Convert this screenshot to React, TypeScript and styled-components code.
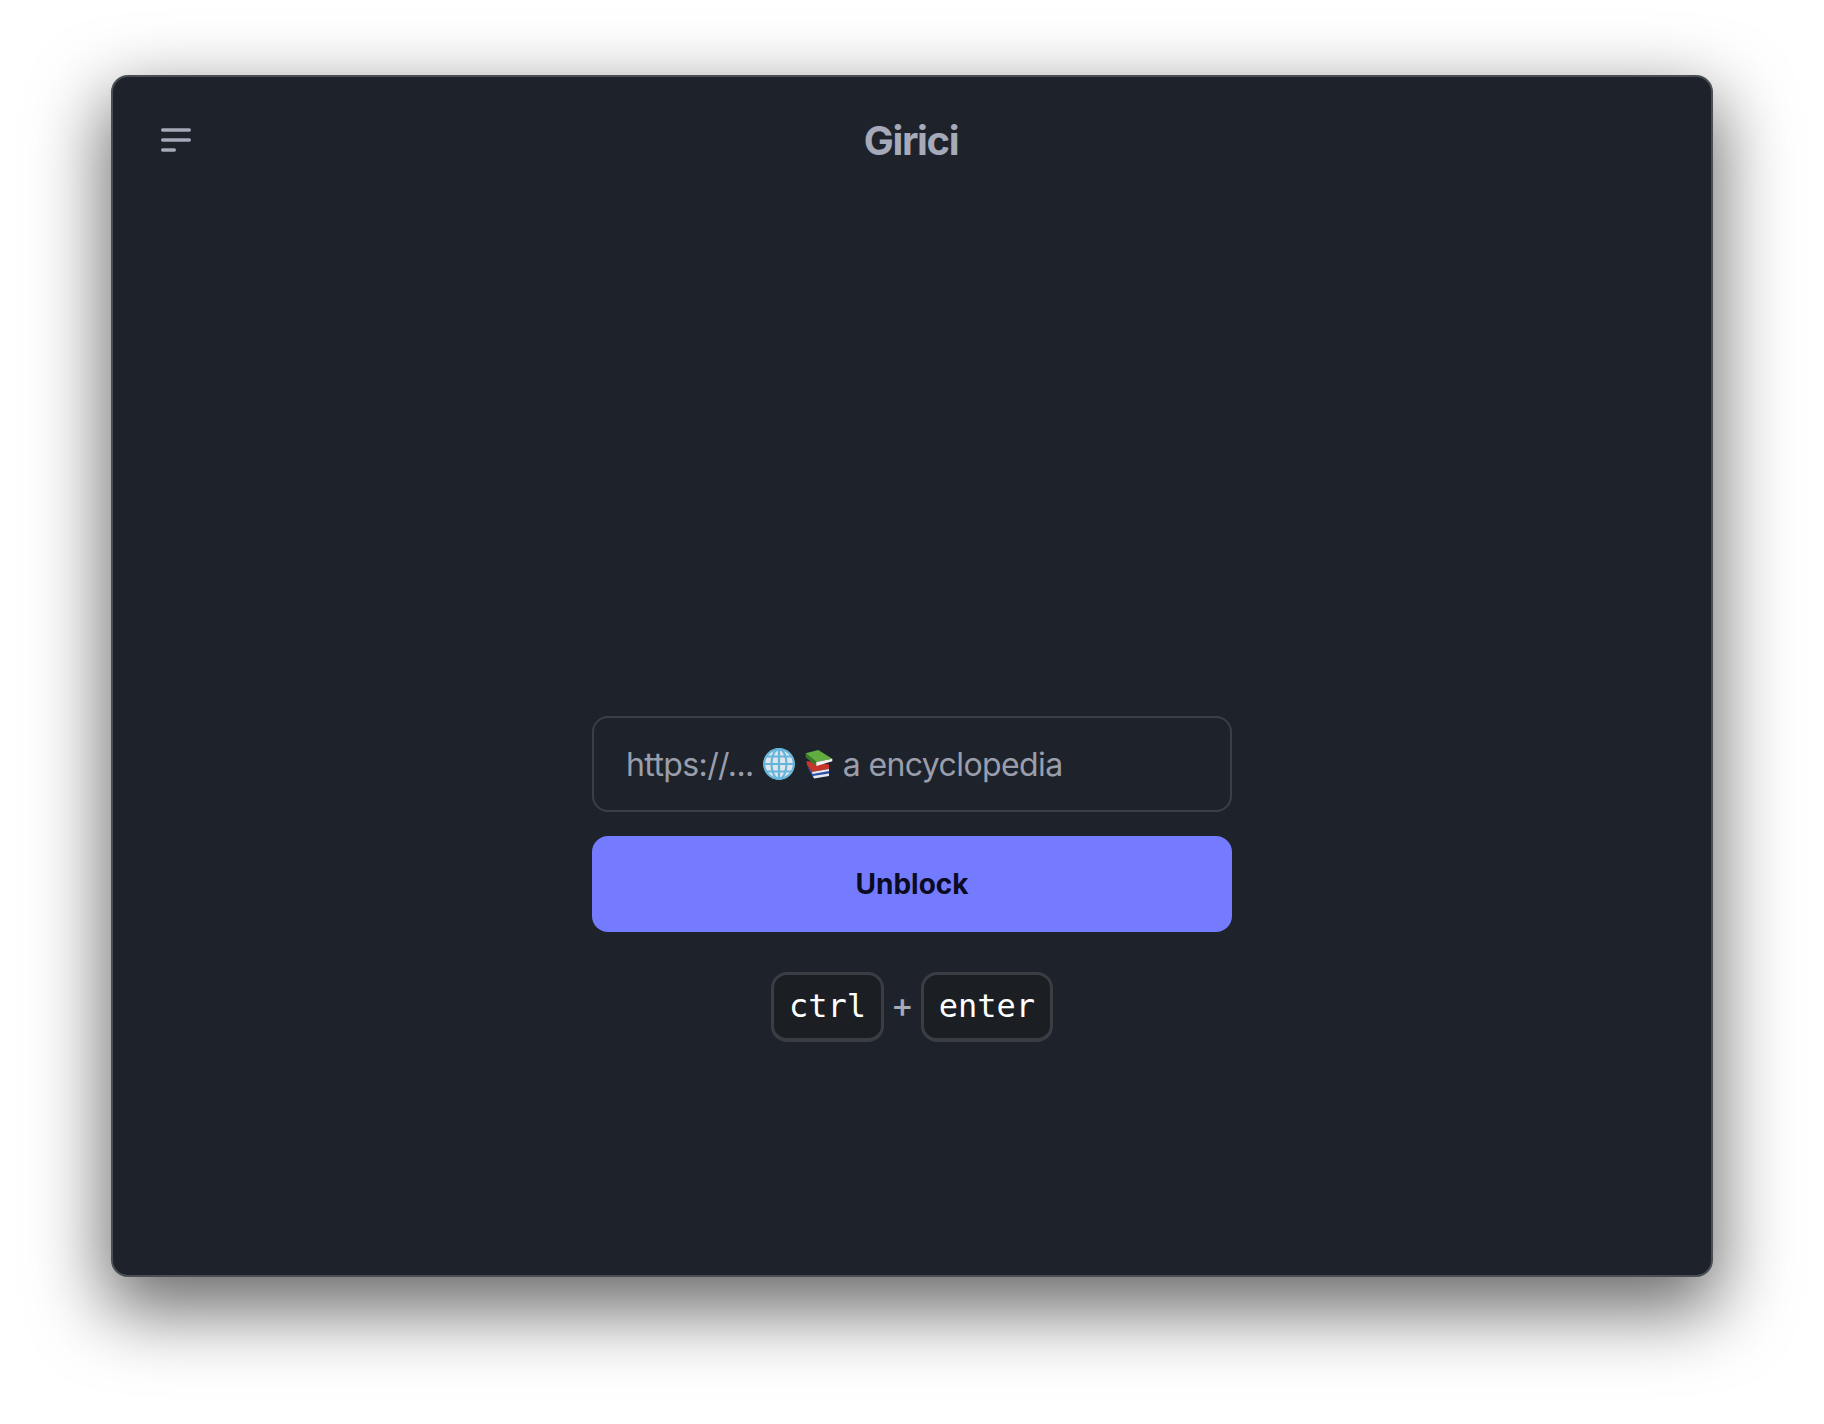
import React from 'react'
import styled, { createGlobalStyle } from 'styled-components'

const GlobalStyle = createGlobalStyle`
  html, body {
    margin: 0;
    padding: 0;
    background: #fff;
  }

  * {
    box-sizing: border-box;
  }
`

const MenuIcon = () => (
  <svg width='30' height='26' viewBox='0 0 30 26' fill='none' stroke='#a5a9b8' strokeWidth='3.4' strokeLinecap='round'>
    <path d='M1.7 3h26.6M1.7 13h26.6M1.7 23h11.6' />
  </svg>
)

const GlobeIcon = () => (
  <svg width='32' height='32' viewBox='0 0 32 32'>
    <circle cx='16' cy='16' r='15.500' fill='#dfe6ea' />
    <g fill='none' stroke='#66b5dc' strokeWidth='2.200'>
      <circle cx='16' cy='16' r='14.800' />
      <ellipse cx='16' cy='16' rx='7.500' ry='14.800' />
      <path d='M16 1v30M1.200 16h29.600M3.600 8.500h24.800M3.600 23.500h24.800' />
    </g>
  </svg>
)

const BooksIcon = () => (
  <svg width='30' height='29' viewBox='0 0 30 29'>
    <path d='M3 16l6 6 16-2v4L9 27.500z' fill='#2c4fa8' />
    <path d='M9 26l16-2.500V26L10 28.500z' fill='#e6e8ec' />
    <path d='M2.500 11L25 14.500V19L8 22l-5-7z' fill='#c4352c' />
    <path d='M8 22l17-3v2L8.500 24z' fill='#ececec' />
    <path d='M1.700 3.300L14.300 0l14 8.700-16 3.300z' fill='#62ad40' />
    <path d='M1.700 3.300l10.600 8.700v4L1.700 7.300z' fill='#3a7a2a' />
    <path d='M12.300 12l16-3.300v2.600L12.300 16z' fill='#f0f0ee' />
  </svg>
)

const App = () => {
  return (
    <>
      <GlobalStyle />
      <Page>
        <Window>
          <Header>
            <MenuButton>
              <MenuIcon />
            </MenuButton>
            <Title>Girici</Title>
          </Header>
          <Main>
            <UrlField>
              <Placeholder>https://...</Placeholder>
              <GlobeIcon />
              <BooksIcon />
              <Placeholder>a encyclopedia</Placeholder>
            </UrlField>
            <SubmitButton>Unblock</SubmitButton>
            <Shortcut>
              <Key>ctrl</Key>
              <Plus>+</Plus>
              <Key>enter</Key>
            </Shortcut>
          </Main>
        </Window>
      </Page>
    </>
  )
}

const Page = styled.div`
  width: 1824px;
  height: 1424px;
  padding: 75px 111px 147px;
  background: #fff;
`

const Window = styled.div`
  height: 1202px;
  display: flex;
  flex-direction: column;
  background: #1e232b;
  border: 2px solid #4a4e54;
  border-radius: 17px;
  box-shadow: 0 28px 72px 6px rgba(0, 0, 0, 0.58);
`

const Header = styled.header`
  position: relative;
  display: flex;
  align-items: center;
  justify-content: center;
  height: 126px;
`

const MenuButton = styled.div`
  position: absolute;
  left: 48px;
  top: 50px;
  display: flex;
`

const Title = styled.h1`
  margin: 0;
  padding-right: 2px;
  font-family: Inter, sans-serif;
  font-size: 40px;
  font-weight: 700;
  letter-spacing: -1.4px;
  color: #a5a9b8;
`

const Main = styled.main`
  flex: 1;
  display: flex;
  flex-direction: column;
  align-items: center;
  padding-top: 513px;
`

const UrlField = styled.div`
  width: 640px;
  height: 96px;
  display: flex;
  align-items: center;
  gap: 9px;
  padding: 0 32px;
  border: 2px solid #3a3e46;
  border-radius: 16px;
  font-family: Inter, sans-serif;
`

const Placeholder = styled.span`
  font-size: 32px;
  letter-spacing: -0.6px;
  color: #9a9eac;
  white-space: nowrap;
`

const SubmitButton = styled.button`
  width: 640px;
  height: 96px;
  margin-top: 24px;
  border: none;
  border-radius: 16px;
  background: #757bff;
  color: #0b0b22;
  font-family: Inter, sans-serif;
  font-size: 28px;
  font-weight: 700;
`

const Shortcut = styled.div`
  display: flex;
  align-items: center;
  gap: 7px;
  margin-top: 40px;
`

const Key = styled.kbd`
  height: 70px;
  display: flex;
  align-items: center;
  padding: 0 15px 2px;
  background: #1b1e23;
  border: 3px solid #3a3d44;
  border-bottom-width: 4px;
  border-radius: 16px;
  color: #fff;
  font-family: 'DejaVu Sans Mono', monospace;
  font-size: 32px;
`

const Plus = styled.span`
  padding-bottom: 6px;
  font-family: Inter, sans-serif;
  font-size: 34px;
  font-weight: 500;
  color: #a5a9b8;
`

export default App
